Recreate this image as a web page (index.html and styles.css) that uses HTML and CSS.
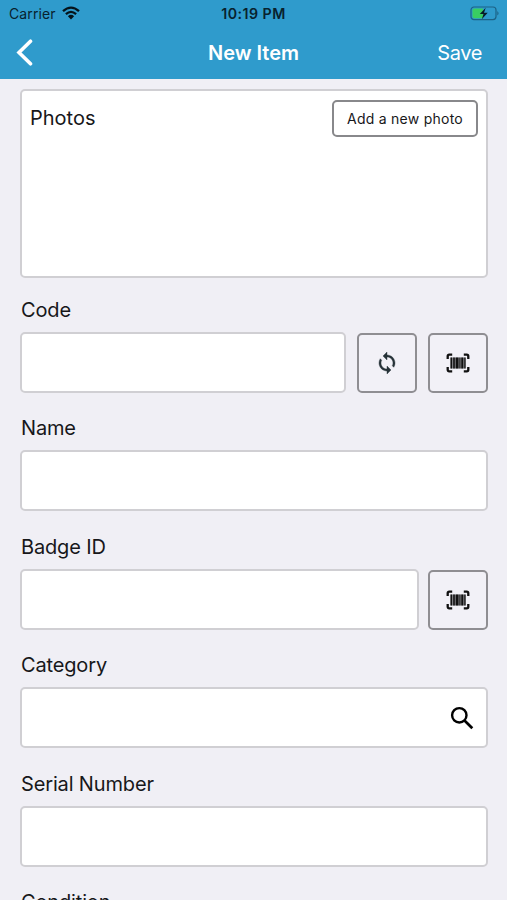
FILE: index.html
```html
<!DOCTYPE html>
<html lang="en">
<head>
<meta charset="utf-8">
<title>New Item</title>
<link rel="stylesheet" href="styles.css">
</head>
<body>
<svg class="defs" aria-hidden="true">
  <symbol id="barcode" viewBox="0 0 24 20">
    <path d="M1.700 6V3.200q0-1.500 1.500-1.500h3M17.800 1.700h3q1.500 0 1.500 1.500V6M22.300 14v2.800q0 1.500-1.500 1.500h-3M6.200 18.300h-3q-1.500 0-1.500-1.500V14" fill="none" stroke="currentColor" stroke-width="2.300"/>
    <path d="M4.500 4.500h15v11h-15z" fill="#8b8b8f"/>
    <path d="M4.500 4.500h1.600v11H4.500zM7.200 4.500h1.600v11H7.200zM9.700 4.500h2.800v11H9.700zM13.400 4.500h1v11h-1zM15.300 4.500h2v11h-2zM18.300 4.500h1.300v11h-1.300z" fill="currentColor"/>
  </symbol>
</svg>
<header class="header">
  <div class="status">
    <div class="carrier"><span>Carrier</span>
      <svg class="wifi" viewBox="0 0 18 14"><path d="M1 5.200Q9-2 17 5.200M3.900 8.100q5.100-4.500 10.200 0" fill="none" stroke="currentColor" stroke-width="2.300"/><path d="M5.900 10.200q3.100-2.700 6.200 0L9 13.500z" fill="currentColor"/></svg>
    </div>
    <div class="time">10:19 PM</div>
    <svg class="battery" viewBox="0 0 30 15"><rect x="1" y="1" width="25" height="12.600" rx="3" fill="none" stroke="#1c6285" stroke-width="1.200"/><path d="M4.300 2.500H13v9.700H4.300Q2.500 12.200 2.500 10.400V4.300Q2.500 2.500 4.300 2.500z" fill="#39cd62"/><path d="M27.300 5q2.500 2.300 0 4.600z" fill="#1c6285"/><path d="M15.700 1.800 9.800 8h3.700l-1.700 5.200L17.700 6.700h-3.700z" fill="#071c25"/></svg>
  </div>
  <nav class="nav">
    <svg class="back" viewBox="0 0 17 27"><path d="M14.500 2.200 3 13.500l11.500 11.300" fill="none" stroke="#fff" stroke-width="3.600" stroke-linecap="round"/></svg>
    <h1>New Item</h1>
    <span class="save">Save</span>
  </nav>
</header>
<main class="form">
  <section class="photos"><span class="caption">Photos</span><button class="add">Add a new photo</button></section>
  <div class="field"><label>Code</label>
    <div class="row"><div class="input"></div>
      <button class="tool refresh"><svg class="sync" viewBox="0 0 24 24"><path fill="currentColor" stroke="currentColor" stroke-width=".4" d="M12 4V1L8 5l4 4V6c3.310 0 6 2.690 6 6 0 1.010-.25 1.970-.7 2.800l1.460 1.460C19.540 15.030 20 13.570 20 12c0-4.420-3.580-8-8-8zm0 14c-3.310 0-6-2.690-6-6 0-1.010.25-1.970.7-2.800L5.240 7.740C4.460 8.970 4 10.430 4 12c0 4.420 3.580 8 8 8v3l4-4-4-4v3z"/></svg></button>
      <button class="tool"><svg class="scan"><use href="#barcode"/></svg></button></div></div>
  <div class="field"><label>Name</label><div class="row"><div class="input"></div></div></div>
  <div class="field"><label>Badge ID</label>
    <div class="row"><div class="input"></div><button class="tool"><svg class="scan"><use href="#barcode"/></svg></button></div></div>
  <div class="field"><label>Category</label>
    <div class="row"><div class="input lookup"><svg class="search" viewBox="0 0 24 24"><circle cx="9.300" cy="9.300" r="7.200" fill="none" stroke="currentColor" stroke-width="2.400"/><path d="m14.500 14.500 7.800 7.800" stroke="currentColor" stroke-width="2.700"/></svg></div></div></div>
  <div class="field"><label>Serial Number</label><div class="row"><div class="input"></div></div></div>
  <div class="field"><label>Condition</label></div>
</main>
</body>
</html>
```

FILE: styles.css
```css
* { box-sizing: border-box; }
body { margin: 0; height: 900px; overflow: hidden; background: #f0eff5; color: #17171a; font-family: Inter, "Liberation Sans", sans-serif; }
button { font: inherit; color: inherit; padding: 0; }
svg { display: block; flex: none; }
.defs { width: 0; height: 0; position: absolute; }
.header { height: 79px; background: #2f9bcc; }
.status { display: grid; grid-template-columns: 1fr auto 1fr; height: 27px; padding: 0 7px 0 9px; align-items: center; color: #08222e; font-size: 14px; }
.carrier { display: flex; align-items: center; gap: 6px; letter-spacing: .1px; }
.wifi { width: 18px; height: 14px; margin-top: -2px; color: #05131a; }
.time { margin-right: 2px; font-weight: 600; font-size: 14.200px; letter-spacing: .45px; }
.battery { width: 30px; height: 15px; margin-top: -1px; justify-self: end; }
.nav { display: grid; grid-template-columns: 1fr auto 1fr; height: 52px; padding: 0 25px 0 16px; align-items: center; color: #fff; }
.back { width: 17px; height: 27px; margin-top: -1px; }
.nav h1 { margin: 0 0 0 9px; font-size: 20px; font-weight: 600; }
.save { justify-self: end; font-size: 20px; letter-spacing: -.4px; }
.form { padding: 10px 19px 0 20px; }
.photos { display: flex; justify-content: space-between; align-items: flex-start; height: 188.750px; padding: 9px 9px 9px 8px; background: #fff; border: 2px solid #d0cfd3; border-radius: 5px; }
.caption { font-size: 20px; line-height: 36px; }
.add { width: 146px; height: 37px; margin-right: -1px; background: #fff; border: 2px solid #88888b; border-radius: 5px; font-size: 14px; letter-spacing: .25px; }
.field { height: 118.500px; padding-top: 17px; }
label { display: block; height: 37px; padding-left: 1px; font-size: 20px; line-height: 30px; letter-spacing: -.15px; }
.row { display: flex; height: 61px; align-items: center; }
.input { flex: 1; height: 61px; background: #fff; border: 2px solid #d0cfd3; border-radius: 5px; }
.tool { display: grid; place-items: center; width: 60px; height: 60px; margin: 1px 0 0 9px; background: #f2f1f7; border: 2px solid #8f8e92; border-radius: 5px; }
.refresh { margin-left: 11px; margin-right: 2px; }
.sync { width: 24px; height: 24px; color: #263238; }
.scan { width: 24px; height: 20px; color: #111; }
.lookup { display: flex; align-items: center; justify-content: flex-end; padding-right: 12px; }
.search { width: 24px; height: 24px; color: #000; }
```
